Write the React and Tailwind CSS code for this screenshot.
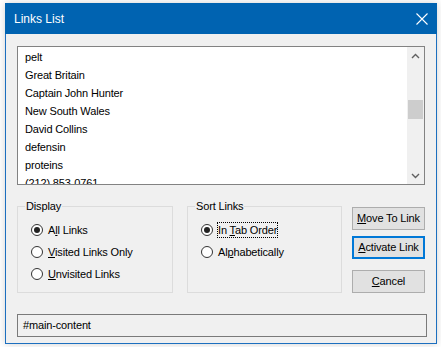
import React from "react"

const links = [
    "pelt",
    "Great Britain",
    "Captain John Hunter",
    "New South Wales",
    "David Collins",
    "defensin",
    "proteins",
    "(212) 853-0761",
]

const Radio = ({ checked, children, focused }) => (
    <div className="flex h-[22px] items-center">
        <span className="flex h-[12px] w-[12px] items-center justify-center rounded-full border border-[#333] bg-white">
            {checked && <span className="h-[6px] w-[6px] rounded-full bg-[#222]" />}
        </span>
        <span className={"ml-[5px] leading-[14px] " + (focused ? "outline outline-1 outline-dotted outline-black" : "")}>
            {children}
        </span>
    </div>
)

const Group = ({ title, width, children }) => (
    <fieldset className={"h-[94px] border border-[#dcdcdc] " + width}>
        <legend className="ml-[7px] px-[1px] leading-[14px]">{title}</legend>
        <div className="pl-[13px] pt-[6px]">{children}</div>
    </fieldset>
)

const Button = ({ children, active }) => (
    <button
        className={
            "flex h-[23px] w-[73px] items-center justify-center bg-[#e1e1e1] leading-none " +
            (active ? "border-2 border-[#0078d7]" : "border border-[#adadad]")
        }
    >
        {children}
    </button>
)

const Chevron = ({ up }) => (
    <svg width="9" height="6" viewBox="0 0 9 6" className="text-[#606060]">
        <path d={up ? "M1 5 L4.5 1.5 L8 5" : "M1 1 L4.5 4.5 L8 1"} fill="none" stroke="currentColor" strokeWidth="1.4" />
    </svg>
)

export default function App() {
    return (
        <div
            className="h-[347px] w-[441px] overflow-hidden bg-white pl-[5px] pt-[3px] text-[11px] tracking-[-0.15px] text-black"
            style={{ fontFamily: '"Liberation Sans", Arial, sans-serif' }}
        >
            <div className="flex h-[341px] w-[432px] flex-col border-x border-b border-[#1c6fbf] bg-[#f0f0f0] shadow-[0_0_8px_rgba(0,0,0,0.18)]">
                <div className="-mx-px flex h-[31px] items-center justify-between bg-[#0063b1] pl-[9px] pr-[9px] text-[12px] tracking-normal text-white">
                    <span>Links List</span>
                    <svg width="12" height="12" viewBox="0 0 12 12">
                        <path d="M0.5 0.5 L11.5 11.5 M11.5 0.5 L0.5 11.5" stroke="white" strokeWidth="1.1" />
                    </svg>
                </div>

                <div className="flex flex-col px-[11px] pt-[12px]">
                    <div className="flex h-[139px] w-[408px] border border-[#828282] bg-white">
                        <div className="flex-1 overflow-hidden pl-[7px] pt-[1px]">
                            {links.map((l) => (
                                <div key={l} className="flex h-[18px] items-center whitespace-nowrap">
                                    {l}
                                </div>
                            ))}
                        </div>
                        <div className="flex w-[17px] flex-col items-center bg-[#f0f0f0]">
                            <div className="flex h-[17px] items-center justify-center">
                                <Chevron up />
                            </div>
                            <div className="mt-[36px] h-[19px] w-[15px] bg-[#cdcdcd]" />
                            <div className="flex-1" />
                            <div className="flex h-[17px] items-center justify-center">
                                <Chevron />
                            </div>
                        </div>
                    </div>

                    <div className="mt-[14px] flex">
                        <Group title="Display" width="w-[156px]">
                            <Radio checked>
                                A<u>l</u>l Links
                            </Radio>
                            <Radio>
                                <u>V</u>isited Links Only
                            </Radio>
                            <Radio>
                                <u>U</u>nvisited Links
                            </Radio>
                        </Group>
                        <div className="ml-[14px]">
                            <Group title="Sort Links" width="w-[155px]">
                                <Radio checked focused>
                                    In <u>T</u>ab Order
                                </Radio>
                                <Radio>
                                    Al<u>p</u>habetically
                                </Radio>
                            </Group>
                        </div>
                        <div className="ml-[10px] flex flex-col pt-[8px]">
                            <Button>
                                <span>
                                    <u>M</u>ove To Link
                                </span>
                            </Button>
                            <div className="mt-[6px]">
                                <Button active>
                                    <span>
                                        <u>A</u>ctivate Link
                                    </span>
                                </Button>
                            </div>
                            <div className="mt-[11px]">
                                <Button>
                                    <span>
                                        <u>C</u>ancel
                                    </span>
                                </Button>
                            </div>
                        </div>
                    </div>

                    <div className="mt-[21px] flex h-[23px] w-[410px] items-center border border-[#7a7a7a] pl-[5px]">
                        #main-content
                    </div>
                </div>
            </div>
        </div>
    )
}
